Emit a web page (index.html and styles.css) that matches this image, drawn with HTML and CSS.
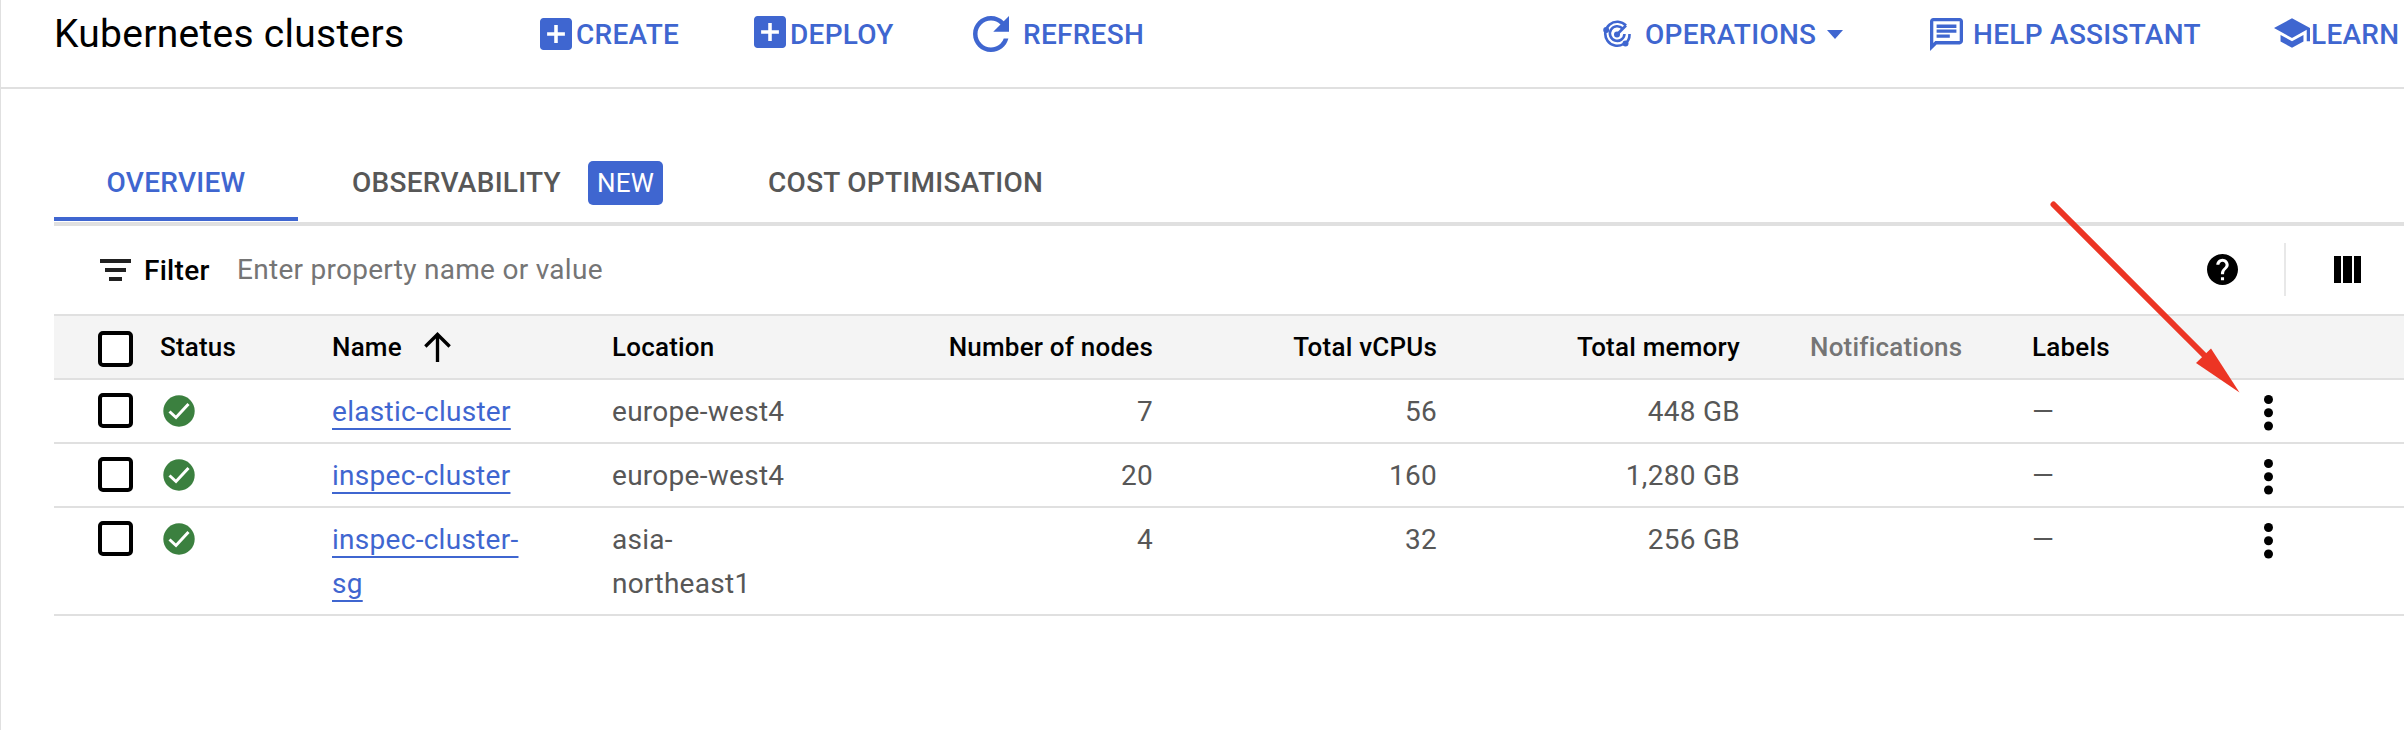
FILE: index.html
```html
<!DOCTYPE html>
<html lang="en">
<head>
<meta charset="utf-8">
<title>Kubernetes clusters</title>
<link rel="stylesheet" href="styles.css">
</head>
<body>
<main class="page">
  <header class="topbar">
    <h1 class="title">Kubernetes clusters</h1>
    <a class="action create"><svg class="ic-plus" viewBox="3 3 18 18"><path d="M19 3H5c-1.110 0-2 .9-2 2v14c0 1.100.890 2 2 2h14c1.100 0 2-.9 2-2V5c0-1.100-.9-2-2-2zm-2 10h-4v4h-2v-4H7v-2h4V7h2v4h4v2z"/></svg><span>CREATE</span></a>
    <a class="action deploy"><svg class="ic-plus raised" viewBox="3 3 18 18"><path d="M19 3H5c-1.110 0-2 .9-2 2v14c0 1.100.890 2 2 2h14c1.100 0 2-.9 2-2V5c0-1.100-.9-2-2-2zm-2 10h-4v4h-2v-4H7v-2h4V7h2v4h4v2z"/></svg><span>DEPLOY</span></a>
    <a class="action refresh"><svg class="ic-refresh" viewBox="4 4 16 16"><path d="M17.650 6.350C16.200 4.900 14.210 4 12 4c-4.420 0-7.990 3.580-7.990 8s3.570 8 7.990 8c3.730 0 6.840-2.550 7.730-6h-2.080c-.820 2.330-3.040 4-5.650 4-3.310 0-6-2.690-6-6s2.690-6 6-6c1.660 0 3.140.690 4.220 1.780L13 11h7V4l-2.350 2.350z"/></svg><span>REFRESH</span></a>
    <a class="action operations"><svg class="ic-ops" viewBox="0 0 28 28"><g fill="none" stroke="currentColor" stroke-width="2.600"><path d="M23 5.500A12 12 0 1 0 20.500 24M26.500 14a12 12 0 0 1-4 9.500"/><path d="M19.500 8.500A7.300 7.300 0 1 0 21.500 14"/><path d="M14 14.500l9-9"/></g><circle cx="3.200" cy="10" r="3"/><circle cx="22.500" cy="23.500" r="3"/><circle cx="14" cy="14.500" r="3"/></svg><span>OPERATIONS</span><i class="caret"></i></a>
    <a class="action help"><svg class="ic-chat" viewBox="2 2 20 20"><path d="M4 4h16v12H5.170L4 17.170V4m0-2c-1.100 0-1.990.9-1.990 2L2 22l4-4h14c1.100 0 2-.9 2-2V4c0-1.100-.9-2-2-2H4zm2 10h8v2H6v-2zm0-3h12v2H6V9zm0-3h12v2H6V6z"/></svg><span>HELP ASSISTANT</span></a>
    <a class="action learn"><svg class="ic-learn" viewBox="1 3 22 18"><path d="M5 13.180v4L12 21l7-3.820v-4L12 17l-7-3.820zM12 3L1 9l11 6 9-4.910V17h2V9L12 3z"/></svg><span>LEARN</span></a>
  </header>

  <section class="content">
    <nav class="tabs">
      <a class="tab active"><span>OVERVIEW</span></a>
      <a class="tab observability"><span>OBSERVABILITY</span><b class="badge">NEW</b></a>
      <a class="tab cost"><span>COST OPTIMISATION</span></a>
    </nav>

    <div class="filter">
      <svg class="ic-filter" viewBox="0 0 31 22"><path d="M0 0h31v4H0zM5 9h21v4H5zM9 18h13v4H9z"/></svg>
      <span class="filter-label">Filter</span>
      <span class="placeholder">Enter property name or value</span>
      <svg class="ic-help" viewBox="2 2 20 20"><path d="M12 2C6.480 2 2 6.480 2 12s4.480 10 10 10 10-4.480 10-10S17.520 2 12 2zm1 17h-2v-2h2v2zm2.070-7.750l-.9.920C13.450 12.900 13 13.500 13 15h-2v-.5c0-1.100.450-2.100 1.170-2.830l1.240-1.260c.370-.360.590-.860.590-1.410 0-1.100-.9-2-2-2s-2 .9-2 2H8c0-2.210 1.790-4 4-4s4 1.790 4 4c0 .880-.360 1.680-.930 2.250z"/></svg>
      <i class="divider"></i>
      <svg class="ic-columns" viewBox="0 0 27 27"><path d="M0 0h7v27H0zM9 0h9v27H9zM20 0h7v27h-7z"/></svg>
    </div>

    <div class="table">
      <div class="row head">
        <i class="box"></i><span class="status">Status</span>
        <span class="name">Name<svg class="ic-up" viewBox="4 4 16 18"><path d="M4 12l1.410 1.410L11 7.830V22h2V7.830l5.580 5.590L20 12l-8-8-8 8z"/></svg></span>
        <span>Location</span><span class="num">Number of nodes</span><span class="num">Total vCPUs</span><span class="num">Total memory</span><span class="notifications">Notifications</span><span class="labels">Labels</span><span></span>
      </div>
      <div class="row">
        <i class="box"></i><span class="status"><svg class="ic-ok" viewBox="0 0 32 32"><circle cx="16" cy="16" r="15.700"/><path d="M6.500 16.500l6.500 6L25.500 9"/></svg></span>
        <span class="name"><a>elastic-cluster</a></span><span>europe-west4</span><span class="num">7</span><span class="num">56</span><span class="num">448 GB</span><span></span><span class="labels">—</span>
        <svg class="ic-more" viewBox="0 0 9 36"><circle cx="4.500" cy="4.500" r="4.500"/><circle cx="4.500" cy="17.800" r="4.500"/><circle cx="4.500" cy="31" r="4.500"/></svg>
      </div>
      <div class="row">
        <i class="box"></i><span class="status"><svg class="ic-ok" viewBox="0 0 32 32"><circle cx="16" cy="16" r="15.700"/><path d="M6.500 16.500l6.500 6L25.500 9"/></svg></span>
        <span class="name"><a>inspec-cluster</a></span><span>europe-west4</span><span class="num">20</span><span class="num">160</span><span class="num">1,280 GB</span><span></span><span class="labels">—</span>
        <svg class="ic-more" viewBox="0 0 9 36"><circle cx="4.500" cy="4.500" r="4.500"/><circle cx="4.500" cy="17.800" r="4.500"/><circle cx="4.500" cy="31" r="4.500"/></svg>
      </div>
      <div class="row">
        <i class="box"></i><span class="status"><svg class="ic-ok" viewBox="0 0 32 32"><circle cx="16" cy="16" r="15.700"/><path d="M6.500 16.500l6.500 6L25.500 9"/></svg></span>
        <span class="name"><a>inspec-cluster-<br>sg</a></span><span>asia-<br>northeast1</span><span class="num">4</span><span class="num">32</span><span class="num">256 GB</span><span></span><span class="labels">—</span>
        <svg class="ic-more" viewBox="0 0 9 36"><circle cx="4.500" cy="4.500" r="4.500"/><circle cx="4.500" cy="17.800" r="4.500"/><circle cx="4.500" cy="31" r="4.500"/></svg>
      </div>
    </div>
  </section>
  <svg class="pointer" viewBox="0 0 200 200"><path class="shaft" d="M13.500 14.500L165 166"/><path class="tip" d="M171 158.500L199.500 202.500L156 173z"/></svg>
</main>
</body>
</html>
```

FILE: styles.css
```css
* { box-sizing: border-box; }

body {
  margin: 0;
  font-family: Roboto, "Liberation Sans", sans-serif;
  font-size: 28px;
  letter-spacing: 0.28px;
  color: #575757;
  background: #fff;
}

svg { display: block; flex: none; fill: currentColor; }
i, b { font-style: normal; }

.page {
  position: relative;
  width: 2404px;
  height: 730px;
  overflow: hidden;
  border-left: 1px solid #e0e0e0;
}

/* Top bar */
.topbar {
  display: flex;
  height: 89px;
  padding-left: 53px;
  border-bottom: 2px solid #e0e0e0;
  white-space: nowrap;
}
.title {
  flex: none;
  width: 486px;
  margin: 0;
  font-size: 39px;
  font-weight: 400;
  line-height: 68px;
  color: #000;
}
.action {
  display: flex;
  flex: none;
  align-items: center;
  height: 68px;
  font-weight: 500;
  color: #3f66d0;
}
.create { width: 214px; }
.deploy { width: 219px; }
.refresh { width: 630px; }
.operations { width: 327px; }
.help { width: 344px; }
.ic-plus { width: 32px; height: 32px; margin-right: 4px; }
.raised { margin-bottom: 5px; }
.ic-refresh { width: 36px; height: 36px; margin-right: 14px; }
.ic-ops { width: 28px; height: 28px; margin-right: 14px; }
.ic-chat { width: 33px; height: 33px; margin-right: 10px; }
.ic-learn { width: 36px; height: 30px; margin: 0 1px 2px 0; }
.learn span { padding-top: 1px; }
.caret {
  margin-left: 11px;
  border: 8.5px solid transparent;
  border-top: 9px solid currentColor;
  border-bottom: 0;
}

/* Tabs */
.content { padding-left: 53px; }
.tabs {
  display: flex;
  height: 137px;
  padding-top: 57px;
  border-bottom: 4px solid #e0e0e0;
  font-weight: 500;
}
.tab { display: flex; align-items: center; height: 75px; padding-bottom: 2px; }
.active {
  justify-content: center;
  width: 244px;
  color: #3f66d0;
  border-bottom: 4px solid #3f66d0;
  padding: 2px 0 0;
}
.observability { width: 470px; padding-left: 54px; }
.badge {
  width: 75px;
  height: 44px;
  margin-left: 27px;
  border-radius: 5px;
  background: #3f66d0;
  color: #fff;
  font-size: 26px;
  font-weight: 400;
  line-height: 44px;
  text-align: center;
}

/* Filter bar */
.filter { display: flex; align-items: center; height: 88px; padding: 0 0 1px 46px; }
.ic-filter { width: 31px; height: 22px; fill: #212121; }
.filter-label { width: 93px; margin-left: 13px; padding-top: 1px; font-weight: 500; color: #000; }
.placeholder { width: 1970px; color: #757575; }
.ic-help { width: 31px; height: 31px; fill: #000; }
.divider { flex: none; width: 2px; height: 53px; margin: 0 48px 0 46px; background: #e8e8e8; }
.ic-columns { width: 27px; height: 27px; fill: #000; }

/* Cluster table */
.table { border-top: 2px solid #e0e0e0; }
.row {
  display: grid;
  grid-template-columns: 62px 172px 280px 241px 300px 284px 303px 292px 222px 1fr;
  padding: 10px 0 8px 44px;
  border-bottom: 2px solid #e0e0e0;
  line-height: 44px;
  align-items: start;
  white-space: nowrap;
}
.head {
  height: 64px;
  padding-top: 9px;
  background: #f4f4f4;
  color: #000;
  font-size: 26px;
  font-weight: 500;
  letter-spacing: 0.2px;
}
.num { text-align: right; }
.notifications { padding-left: 70px; color: #757575; }
.box {
  width: 35px;
  height: 35px;
  margin-top: 3px;
  border: 4px solid #000;
  border-radius: 5px;
  background: #fff;
}
.head .box { height: 36px; margin-top: 6px; }
.name { display: flex; align-items: center; }
.name a {
  color: #3f66d0;
  text-decoration: underline;
  text-decoration-thickness: 2px;
  text-underline-offset: 7px;
  text-decoration-skip-ink: none;
}
.ic-up { width: 27px; height: 30px; margin-left: 22px; fill: #000; }
.ic-ok { width: 32px; height: 32px; margin: 5px 0 0 3px; fill: #3b803f; }
.ic-ok path { fill: none; stroke: #fff; stroke-width: 3; }
.ic-more { width: 9px; height: 36px; margin: 5px 0 0 10px; fill: #000; }

/* Red callout arrow above the table */
.pointer {
  position: absolute;
  left: 2039px;
  top: 190px;
  width: 200px;
  height: 200px;
  overflow: visible;
}
.shaft { stroke: #ec3524; stroke-width: 6; stroke-linecap: round; }
.tip { fill: #ec3524; }
```
